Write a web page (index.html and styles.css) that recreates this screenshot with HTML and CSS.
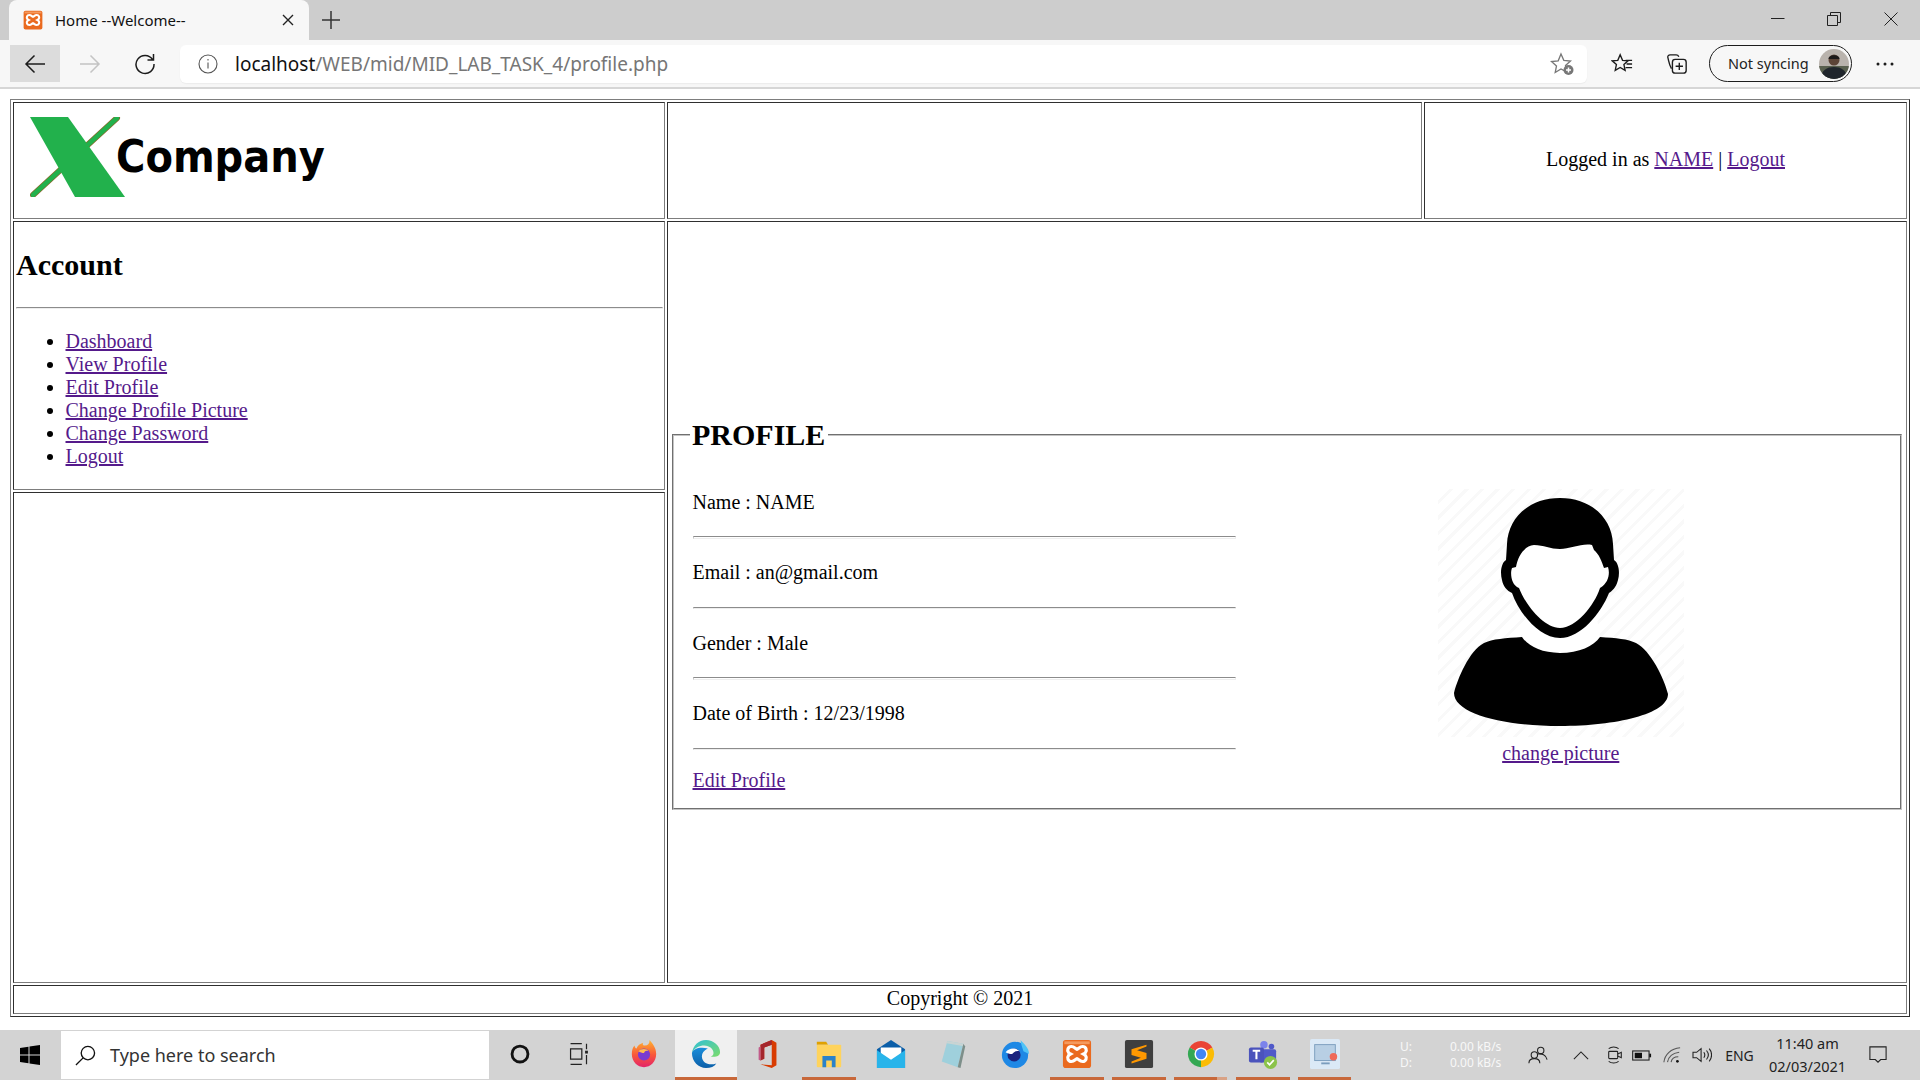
FILE: index.html
```html
<!DOCTYPE html>
<html lang="en">
<head>
<meta charset="utf-8">
<title>Home --Welcome--</title>
<link rel="stylesheet" href="styles.css">
</head>
<body>
<svg class="defs" width="0" height="0" aria-hidden="true">
  <defs>
    <symbol id="xampp" viewBox="0 0 32 32">
      <rect x="1" y="1" width="30" height="30" rx="3" fill="#ea6a1f"/>
      <rect x="2.5" y="2.5" width="27" height="3" fill="#f59a5e"/>
      <path d="M10 8c3 0 4 2 6 3 2-1 3-3 6-3 3.500 0 5 4 3 6.500-1 1-2 1.500-2 1.500s1 .5 2 1.500c2 2.500.5 6.500-3 6.500-3 0-4-2-6-3-2 1-3 3-6 3-3.500 0-5-4-3-6.500 1-1 2-1.500 2-1.500s-1-.5-2-1.500C5 12 6.500 8 10 8z" fill="none" stroke="#fff" stroke-width="3.400"/>
    </symbol>
  </defs>
</svg>

<header class="chrome">
  <div class="tabstrip">
    <div class="tab">
      <svg class="favicon"><use href="#xampp"/></svg>
      <span class="tab-title">Home --Welcome--</span>
      <svg class="tab-close" viewBox="0 0 12 12"><path d="M1 1l10 10M11 1L1 11"/></svg>
    </div>
    <svg class="newtab" viewBox="0 0 18 18"><path d="M9 0v18M0 9h18"/></svg>
    <div class="winctl">
      <span class="winbtn"><svg viewBox="0 0 14 14"><path d="M0 6.500h13.500"/></svg></span>
      <span class="winbtn"><svg viewBox="0 0 14 14"><path d="M.5 3.500h10v10H.5zM3.500 3.500v-3h10v10h-3"/></svg></span>
      <span class="winbtn"><svg viewBox="0 0 14 14"><path d="M.5.5l13 13M13.500.5l-13 13"/></svg></span>
    </div>
  </div>
  <div class="toolbar">
    <span class="navbtn navbtn-active"><svg viewBox="0 0 22 22"><path d="M21 11H2M10.500 2.500L2 11l8.500 8.500"/></svg></span>
    <span class="navbtn navbtn-off"><svg viewBox="0 0 22 22"><path d="M1 11h19M11.500 2.500L20 11l-8.500 8.500"/></svg></span>
    <span class="navbtn"><svg viewBox="0 0 22 22"><path d="M18.500 6.500A9 9 0 1 0 20 11M19.500 1v6h-6"/></svg></span>
    <div class="address">
      <svg class="info" viewBox="0 0 20 20"><circle cx="10" cy="10" r="9"/><path d="M10 8.500v6M10 5v1.600"/></svg>
      <span class="url"><span class="url-host">localhost</span>/WEB/mid/MID_LAB_TASK_4/profile.php</span>
      <svg class="addfav" viewBox="0 0 24 24"><path d="M11 2l2.800 6.300 6.700.7-5 4.500 1.200 6.500L11 17l-5.800 3.500 1.300-6.500-5-4.500 6.700-.7z"/><circle class="addfav-dot" cx="18.500" cy="18" r="5"/><path class="addfav-plus" d="M18.500 15.500v5M16 18h5"/></svg>
    </div>
    <span class="navbtn navbtn-fav"><svg viewBox="0 0 24 24"><path d="M10 2l2.600 6 6 .6-4.500 4 1.300 6.400-5.400-3.200-5.400 3.200 1.300-6.400-4.500-4 6-.6zM16 8h7M17 12h6M16 16h7"/></svg></span>
    <span class="navbtn"><svg viewBox="0 0 24 24"><path d="M6 17C3 12 3 8 2 5c-.4-1.800.8-3 2.500-3H11c1.400 0 2.500.8 3 2"/><rect x="7" y="7" width="15" height="15" rx="3"/><path d="M14.500 10.500v8M10.500 14.500h8"/></svg></span>
    <div class="sync">
      <span>Not syncing</span>
      <svg class="avatar" viewBox="0 0 30 30">
        <defs><clipPath id="avatar-clip"><circle cx="15" cy="15" r="15"/></clipPath></defs>
        <g clip-path="url(#avatar-clip)">
          <rect width="30" height="30" fill="#b9b3ad"/>
          <rect y="17" width="30" height="13" fill="#59604f"/>
          <path d="M2 30c0-9 6-12 13-12s13 3 13 12z" fill="#20262c"/>
          <circle cx="15" cy="11" r="5.500" fill="#5c4437"/>
          <path d="M9.500 10c0-5 11-5 11 0z" fill="#1c1a1a"/>
        </g>
      </svg>
    </div>
    <span class="navbtn navbtn-more"><svg viewBox="0 0 22 6"><circle cx="4" cy="3" r="1.500"/><circle cx="11" cy="3" r="1.500"/><circle cx="18" cy="3" r="1.500"/></svg></span>
  </div>
</header>

<main class="page">
  <table class="layout">
    <colgroup><col class="col-a"><col class="col-b"><col class="col-c"></colgroup>
    <tr class="row-head">
      <td class="brand">
        <div class="logo">
          <svg class="logo-x" viewBox="0 0 96 80">
            <path d="M87 1L3 78" fill="none" stroke="#8a6a2c" stroke-width="6" stroke-linecap="round"/>
            <path d="M87 1L3 78" fill="none" stroke="#22b14c" stroke-width="4.500" stroke-linecap="round"/>
            <path d="M0 0h38l57 80H45z" fill="#22b14c"/>
          </svg>
          <span class="logo-text">Company</span>
        </div>
      </td>
      <td></td>
      <td class="login">Logged in as <a href="#">NAME</a> | <a href="#">Logout</a></td>
    </tr>
    <tr class="row-side">
      <td class="side">
        <h2 class="side-title">Account</h2>
        <hr class="rule side-rule">
        <ul class="side-nav">
          <li><a href="#">Dashboard</a></li>
          <li><a href="#">View Profile</a></li>
          <li><a href="#">Edit Profile</a></li>
          <li><a href="#">Change Profile Picture</a></li>
          <li><a href="#">Change Password</a></li>
          <li><a href="#">Logout</a></li>
        </ul>
      </td>
      <td class="content" colspan="2" rowspan="2">
        <fieldset class="profile">
          <legend>PROFILE</legend>
          <div class="profile-grid">
            <div class="profile-info">
              <p class="field">Name : NAME</p>
              <hr class="rule">
              <p class="field">Email : an@gmail.com</p>
              <hr class="rule">
              <p class="field">Gender : Male</p>
              <hr class="rule">
              <p class="field">Date of Birth : 12/23/1998</p>
              <hr class="rule rule-last">
              <a href="#">Edit Profile</a>
            </div>
            <div class="profile-pic">
              <svg class="person" viewBox="2 1 246 248">
                <path fill="#fff" d="M98 57C108 57 114 61 124 61C134 61 146 55 156 57L158 62C163 66 166 74 168 80L172 79C174 85 173 95 164 100L160 125L164 149C158 158 143 165 124 165C105 165 92 158 86 149L90 125L83 100C75 97 74 85 76 80L80 79C82 68 88 58 98 57Z"/>
                <path fill-rule="evenodd" d="M124 10C155 10 176 30 177 56L178 72C183 75 184 85 182 92C180 100 176 103 173 105C165 125 145 150 124 150C103 150 83 125 76 105C71 103 67 98 66 92C64 85 65 75 70 72L71 56C72 30 93 10 124 10ZM98 57C108 57 114 61 124 61C134 61 146 55 156 57L158 62C163 66 166 74 168 80L172 79C174 85 173 95 164 100C158 118 140 140 124 140C108 140 90 118 83 100C75 97 74 85 76 80L80 79C82 68 88 58 98 57Z"/>
                <path d="M86 149C92 158 105 165 124 165C143 165 158 158 164 149C180 150 192 151 200 155C215 163 228 190 232 206C232 226 180 238 124 238C68 238 18 226 18 205C22 190 33 163 48 155C56 151 70 150 86 149Z"/>
              </svg>
              <a href="#">change picture</a>
            </div>
          </div>
        </fieldset>
      </td>
    </tr>
    <tr class="row-empty"><td></td></tr>
    <tr class="row-foot"><td class="foot" colspan="3">Copyright © 2021</td></tr>
  </table>
</main>

<footer class="taskbar">
  <span class="start">
    <svg viewBox="0 0 20 20"><path d="M0 3l8.500-1.200V9.500H0zM9.500 1.600L20 0v9.500H9.500zM0 10.500h8.500v7.700L0 17zM9.500 10.500H20V20L9.500 18.400z"/></svg>
  </span>
  <div class="search">
    <svg viewBox="0 0 22 22"><circle cx="13.500" cy="8.500" r="7"/><path d="M8.500 13.500L1 21"/></svg>
    <span>Type here to search</span>
  </div>
  <span class="slot"><svg viewBox="0 0 32 32"><circle cx="16" cy="16" r="8.500" fill="none" stroke="#111" stroke-width="3"/></svg></span>
  <span class="slot slot-taskview"><svg viewBox="0 0 32 32" fill="none" stroke="#222" stroke-width="1.300"><path d="M7 5h12M7 10.500h12v11H7zM7 27h12M24 5v6M24 17v10"/><rect x="22.500" y="12.500" width="3" height="3" fill="#222" stroke="none"/></svg></span>
  <span class="slot"><svg viewBox="0 0 32 32">
    <defs><linearGradient id="ff" x1="0" y1="0" x2="0" y2="1"><stop offset="0" stop-color="#ffb52e"/><stop offset=".55" stop-color="#f9573a"/><stop offset="1" stop-color="#e3246a"/></linearGradient></defs>
    <path d="M22 1c3 4 7 8 7 15 0 8-6 14-13 14S3 24 3 16c0-4 1-7 3-9 0 2 1 3 2 3 1-3 4-5 7-6-1 2 0 3 2 3 3 0 5-2 5-6z" fill="url(#ff)"/>
    <circle cx="16" cy="16.500" r="6.500" fill="#7a3bd0"/><path d="M10 13c3-3 9-3 11 0-3-1-4 0-5 2-2 0-4-1-6-2z" fill="#ffbd4f"/></svg></span>
  <span class="slot slot-active"><svg viewBox="0 0 32 32">
    <defs><linearGradient id="edge-a" x1="0" y1="0" x2="1" y2="1"><stop offset="0" stop-color="#2fbfd8"/><stop offset="1" stop-color="#7bdc6a"/></linearGradient>
    <linearGradient id="edge-b" x1="0" y1="0" x2="0" y2="1"><stop offset="0" stop-color="#1b8edb"/><stop offset="1" stop-color="#0c5fa8"/></linearGradient></defs>
    <path d="M16 1C8 1 2 7 1 15c3-6 8-8 13-8 6 0 10 4 10 8 0 2-1 3-3 4h3c4 0 7-2 7-5C31 7 24 1 16 1z" fill="url(#edge-a)"/>
    <path d="M1 15c0 9 7 16 15 16 5 0 9-2 11-5-6 2-13 1-15-5-1-3 0-7 3-9 1-1 2-1.500 3-2C10 8 2 10 1 15z" fill="url(#edge-b)"/></svg></span>
  <span class="slot"><svg viewBox="0 0 32 32"><path d="M8 6l12-5 5 3v24l-5 3-12-4 12 1V6l-8 3v12l-4 2z" fill="#d83b01"/><path d="M8 6l12-5v5l-8 3v12l-4 2z" fill="#a4262c"/><path d="M8 8v15l-2-1V9z" fill="#c25b8a"/></svg></span>
  <span class="slot slot-run"><svg viewBox="0 0 32 32"><path d="M3 3h10l2 3H3z" fill="#e0a100"/><rect x="3" y="6" width="26" height="24" rx="1" fill="#ffd35c"/><path d="M9 30V18h14v12h-4v-7h-6v7z" fill="#2b82c9"/></svg></span>
  <span class="slot"><svg viewBox="0 0 32 32"><path d="M1 11L16 1l15 10v20H1z" fill="#0a5ea8"/><path d="M5 9h22v8l-11 6-11-6z" fill="#fff"/><path d="M1 12l15 10 15-10v19H1z" fill="#28b4ea"/></svg></span>
  <span class="slot"><svg viewBox="0 0 32 32"><path d="M10 2l17 3-6 25-17-6z" fill="#9fd0dc"/><path d="M27 5l2 3-5 23-3-1z" fill="#7d8f8a"/><path d="M10 2l17 3-.6 2.500-17-3z" fill="#c9d4d3"/></svg></span>
  <span class="slot"><svg viewBox="0 0 32 32"><circle cx="16" cy="17" r="14" fill="#1e88e5"/><path d="M22 1c3 4 9 8 9 15l-6-3c-1-4-3-8-3-12z" fill="#4fc3f7"/><circle cx="15" cy="17" r="7" fill="#1a237e"/><path d="M6 14c4-5 11-5 15-1-5-1-7 2-8 3-3 0-5-1-7-2z" fill="#fff"/></svg></span>
  <span class="slot slot-run"><svg><use href="#xampp"/></svg></span>
  <span class="slot slot-run"><svg viewBox="0 0 32 32"><rect x="1" y="1" width="30" height="30" rx="2" fill="#3f3f3f"/><path d="M24 6L8 11v6l10 3-10 4v2l16-5v-6l-10-3 10-4z" fill="#ff9800"/></svg></span>
  <span class="slot slot-run slot-run-multi"><svg viewBox="0 0 32 32"><path d="M16 16L3.900 9A14 14 0 0 1 28.100 9z" fill="#ea4335"/><path d="M16 16L28.100 9A14 14 0 0 1 16 30z" fill="#fbbc05"/><path d="M16 16L16 30A14 14 0 0 1 3.900 9z" fill="#34a853"/><circle cx="16" cy="16" r="7" fill="#fff"/><circle cx="16" cy="16" r="5.500" fill="#4285f4"/></svg></span>
  <span class="slot slot-run"><svg viewBox="0 0 32 32"><circle cx="17" cy="6" r="4" fill="#7b83eb"/><circle cx="25" cy="8" r="3" fill="#5059c9"/><rect x="12" y="11" width="18" height="14" rx="2" fill="#5059c9"/><rect x="1" y="9" width="16" height="16" rx="2" fill="#4b53bc"/><path d="M5 12.500h8M9 12.500v9" stroke="#fff" stroke-width="2.200" fill="none"/><circle cx="24" cy="25" r="7" fill="#8bc34a"/><path d="M20.500 25l2.500 2.500 4.500-5" stroke="#fff" stroke-width="1.800" fill="none"/></svg></span>
  <span class="slot slot-run"><svg viewBox="0 0 32 32"><rect width="32" height="32" rx="2" fill="#dbe9f6"/><rect x="5" y="6" width="22" height="17" fill="#b8cfe4" stroke="#7b9dbd"/><path d="M12 26h9" stroke="#7b9dbd" stroke-width="2"/><circle cx="25" cy="19" r="4" fill="#ef6a5a"/></svg></span>

  <div class="tray">
    <div class="netmeter">
      <div class="net-row"><span>U:</span><span>0.00 kB/s</span></div>
      <div class="net-row"><span>D:</span><span>0.00 kB/s</span></div>
    </div>
    <span class="tray-i tray-people"><svg viewBox="0 0 22 22"><circle cx="14" cy="6" r="3.500"/><circle cx="7" cy="11" r="3.500"/><path d="M1 20c0-3 2.500-5 6-5s6 2 6 5M11 10c4-1 9 1 10 6"/></svg></span>
    <span class="tray-i tray-chev"><svg viewBox="0 0 18 10"><path d="M1 9l8-8 8 8"/></svg></span>
    <span class="tray-i tray-cam"><svg viewBox="0 0 20 22"><rect x="3" y="7" width="10" height="8" rx="1"/><path d="M13 10l4-2v6l-4-2M3 4c3-2.500 8-2.500 11 0M3 18c3 2.500 8 2.500 11 0"/></svg></span>
    <span class="tray-i tray-bat"><svg viewBox="0 0 22 12"><rect x=".75" y="1" width="18" height="10"/><rect class="solid" x="3" y="3" width="8" height="6"/><rect class="solid" x="19" y="4" width="2" height="4"/></svg></span>
    <span class="tray-i tray-wifi"><svg viewBox="0 0 22 20"><path class="faint" d="M2 18C3 9 10 3 20 2M6 18c1-6 6-10 13-11M10 18c.5-3 3-6 8-6"/><circle class="solid" cx="17" cy="17" r="1.500"/></svg></span>
    <span class="tray-i tray-vol"><svg viewBox="0 0 22 20"><path d="M1 7h4l5-4v14l-5-4H1zM13 7c1.500 2 1.500 4 0 6M16 5c2.500 3 2.500 7 0 10M19 3c3.500 4 3.500 10 0 14"/></svg></span>
    <span class="tray-eng">ENG</span>
    <div class="clock"><span>11:40 am</span><span>02/03/2021</span></div>
    <span class="tray-i tray-note"><svg viewBox="0 0 20 20"><path d="M1 1h18v14h-6l-3 3-3-3H1z"/></svg></span>
  </div>
</footer>
</body>
</html>
```

FILE: styles.css
```css
* { box-sizing: border-box; }

html, body { height: 100%; }

body {
  margin: 0;
  display: flex;
  flex-direction: column;
  height: 100vh;
  overflow: hidden;
  background: #fff;
  color: #000;
  font: 20px/23px "Liberation Serif", "Times New Roman", serif;
}

.defs { position: absolute; }

svg { display: block; }

/* browser chrome */
.chrome { flex: none; font-family: "Noto Sans", "Open Sans", sans-serif; }

.tabstrip {
  height: 40px;
  background: #cdcdcd;
  display: flex;
  align-items: flex-end;
  padding-left: 9px;
}

.tab {
  width: 300px;
  height: 40px;
  background: #f7f7f7;
  border-radius: 8px 8px 0 0;
  display: flex;
  align-items: center;
  padding-left: 14px;
}

.favicon { width: 20px; height: 20px; flex: none; }

.tab-title { margin-left: 12px; font-size: 15px; line-height: 20px; color: #111; width: 227px; white-space: nowrap; }

.tab-close { width: 12px; height: 12px; fill: none; stroke: #222; stroke-width: 1.400; }

.newtab {
  width: 18px;
  height: 18px;
  margin: 0 0 11px 13px;
  fill: none;
  stroke: #333;
  stroke-width: 1.500;
}

.winctl { margin-left: auto; display: flex; align-self: flex-start; padding: 12px 1px 0 0; }

.winbtn { width: 56.500px; display: flex; justify-content: center; }

.winbtn svg { width: 14px; height: 14px; fill: none; stroke: #222; stroke-width: 1; }

.toolbar {
  height: 49px;
  background: #f7f7f7;
  border-bottom: 2px solid #d6d6d6;
  display: flex;
  align-items: flex-start;
  padding: 5px 7.500px 0 10px;
}

.navbtn {
  width: 55px;
  height: 37px;
  flex: none;
  display: flex;
  align-items: center;
  justify-content: center;
}

.navbtn svg { width: 22px; height: 22px; fill: none; stroke: #1c1c1c; stroke-width: 1.500; }

.navbtn-active { width: 50px; background: #dcdcdc; margin-right: 2.500px; }

.navbtn-off svg { stroke: #c4c4c4; }

.navbtn-fav { margin-left: 7.500px; }

.navbtn-more { margin-left: 5.500px; }

.navbtn-more svg { height: 6px; stroke: none; fill: #1c1c1c; }

.address {
  flex: 1;
  height: 38px;
  margin-left: 7.500px;
  background: #fff;
  border-radius: 6px;
  display: flex;
  align-items: center;
  padding: 0 13px 0 18px;
  box-shadow: 0 1px 1px #ececec;
}

.info { width: 20px; height: 20px; fill: none; stroke: #555; stroke-width: 1.100; flex: none; }

.url { margin-left: 17px; font-size: 19px; line-height: 26px; color: #767676; white-space: nowrap; }

.url-host { color: #111; }

.addfav { margin-left: auto; width: 24px; height: 24px; fill: none; stroke: #777; stroke-width: 1.300; }

.addfav-dot { fill: #777; stroke: none; }

.addfav-plus { stroke: #fff; stroke-width: 1.500; }

.sync {
  width: 143px;
  height: 37px;
  margin-left: 4.500px;
  flex: none;
  border: 1.500px solid #1c1c1c;
  border-radius: 19px;
  display: flex;
  align-items: center;
  justify-content: space-between;
  padding: 0 2px 0 18px;
  font-size: 14.500px;
  color: #222;
}

.avatar { width: 30px; height: 30px; }

/* page */
.page {
  flex: 1;
  min-height: 0;
  overflow: hidden;
  padding: 10px 0 0 10px;
}

.layout {
  width: 1900px;
  table-layout: fixed;
  border-collapse: separate;
  border-spacing: 2px;
  border: 1px solid;
  border-color: #7d7d7d #2f2f2f #2f2f2f #7d7d7d;
}

.col-a { width: 652px; }
.col-b { width: 755px; }
.col-c { width: 483px; }

.layout > tbody > tr > td {
  padding: 2px;
  border: 1px solid;
  border-color: #2f2f2f #7d7d7d #7d7d7d #2f2f2f;
}

.row-head { height: 117px; }
.row-side { height: 269px; }
.row-empty { height: 491px; }
.row-foot { height: 28px; }

a { color: #551a8b; }

.layout > tbody > tr > td.brand { vertical-align: top; padding: 14px 0 0 16px; }

.logo { display: flex; align-items: flex-start; }

.logo-x { width: 96px; height: 80px; flex: none; }

.logo-text {
  margin: 13px 0 0 -10px;
  font: bold 44.500px/54px "DejaVu Sans", sans-serif;
  font-stretch: condensed;
  white-space: nowrap;
}

.layout > tbody > tr > td.login { text-align: center; padding-bottom: 4px; }

.side { vertical-align: top; }

.side-title { margin: 24px 0 24.700px; font-size: 30px; line-height: 34px; }

.rule {
  display: block;
  margin: 0;
  height: 2.500px;
  border: 0;
  border-top: 1px solid #8c8c8c;
  border-left: 1px solid #c8c8c8;
  border-bottom: 1px solid #eee;
  border-right: 1px solid #eee;
}

.side-rule { margin: 0 -1px 21px 0; }

.side-nav { margin: 0; padding-left: 49.500px; }

.layout > tbody > tr > td.content { padding: 0; vertical-align: top; }

.profile {
  margin: 196px 4px 0 4px;
  padding: 0 17.500px 16.500px 18.500px;
  min-width: 0;
  border: 2px groove #c4c4c4;
}

.profile legend {
  margin-left: -3px;
  padding: 0 2.500px;
  font-size: 30px;
  font-weight: bold;
  line-height: 34px;
}

.profile-grid {
  display: grid;
  grid-template-columns: 546.500px 1fr;
  padding-top: 38.500px;
}

.profile-info .rule { width: 543px; margin-bottom: 22.500px; }

.profile-info .rule-last { margin-bottom: 18.500px; }

.profile-info a { display: block; width: max-content; }

.field { margin: 0 0 22.500px; }

.profile-pic {
  margin-top: -1.500px;
  display: flex;
  flex-direction: column;
  align-items: center;
  gap: 4.500px;
}

.person {
  width: 246px;
  height: 248px;
  background: repeating-linear-gradient(135deg, #fff 0 8px, #f9f9f9 8px 11px);
}

.layout > tbody > tr > td.foot { text-align: center; padding: 1px 2px 3px; }

/* taskbar */
.taskbar {
  flex: none;
  height: 50px;
  background: #d3d3d3;
  display: flex;
  align-items: center;
  font-family: "Noto Sans", "Open Sans", sans-serif;
}

.start { width: 61px; flex: none; display: flex; justify-content: center; padding-right: 1px; }

.start svg { width: 20px; height: 20px; fill: #000; }

.search {
  width: 428px;
  height: 48px;
  flex: none;
  background: #fff;
  display: flex;
  align-items: center;
  padding-left: 14px;
  font-size: 18px;
  color: #333;
}

.search svg { width: 21px; height: 21px; fill: none; stroke: #111; stroke-width: 1.400; }

.search span { margin-left: 14px; }

.slot {
  width: 61.900px;
  height: 50px;
  flex: none;
  display: flex;
  align-items: center;
  justify-content: center;
  border-bottom: 3px solid transparent;
}

.slot svg { width: 30px; height: 30px; }

.slot-taskview { padding-right: 5px; }

.slot-active {
  background: #f0f0f0;
  border-bottom-color: #c8683a;
}

.slot-run {
  border-bottom: 3px solid;
  border-image: linear-gradient(to right, transparent 5px, #c8683a 5px, #c8683a calc(100% - 5px), transparent calc(100% - 5px)) 1;
}

.slot-run-multi {
  border-image: linear-gradient(to right, transparent 5px, #c8683a 5px, #c8683a 46px, #d9a285 46px, #d9a285 56px, transparent 56px) 1;
}

.tray {
  margin-left: auto;
  display: flex;
  align-items: center;
  height: 100%;
  padding-right: 17px;
  color: #222;
}

.netmeter {
  width: 115px;
  font-size: 12px;
  line-height: 16px;
  color: #f8f8f8;
}

.net-row { display: flex; gap: 38px; }

.tray-i {
  display: flex;
  align-items: center;
  justify-content: center;
  height: 30px;
  flex: none;
}

.tray-i svg { fill: none; stroke: #222; stroke-width: 1.200; }

.tray-i .solid { fill: #111; stroke: none; }

.tray-i .faint { stroke: #555; }

.tray-people { width: 45px; }
.tray-people svg { width: 20px; height: 20px; }
.tray-chev { width: 42px; }
.tray-chev svg { width: 16px; height: 9px; }
.tray-cam { width: 25px; }
.tray-cam svg { width: 18px; height: 20px; }
.tray-bat { width: 30px; }
.tray-bat svg { width: 20px; height: 11px; }
.tray-wifi { width: 30px; }
.tray-wifi svg { width: 20px; height: 18px; }
.tray-vol { width: 30px; }
.tray-vol svg { width: 20px; height: 18px; }

.tray-eng { width: 45px; text-align: center; font-size: 14px; }

.clock {
  width: 91px;
  display: flex;
  flex-direction: column;
  align-items: center;
  font-size: 14.500px;
  line-height: 23px;
}

.tray-note { width: 50px; }
.tray-note svg { width: 20px; height: 18px; }
```
